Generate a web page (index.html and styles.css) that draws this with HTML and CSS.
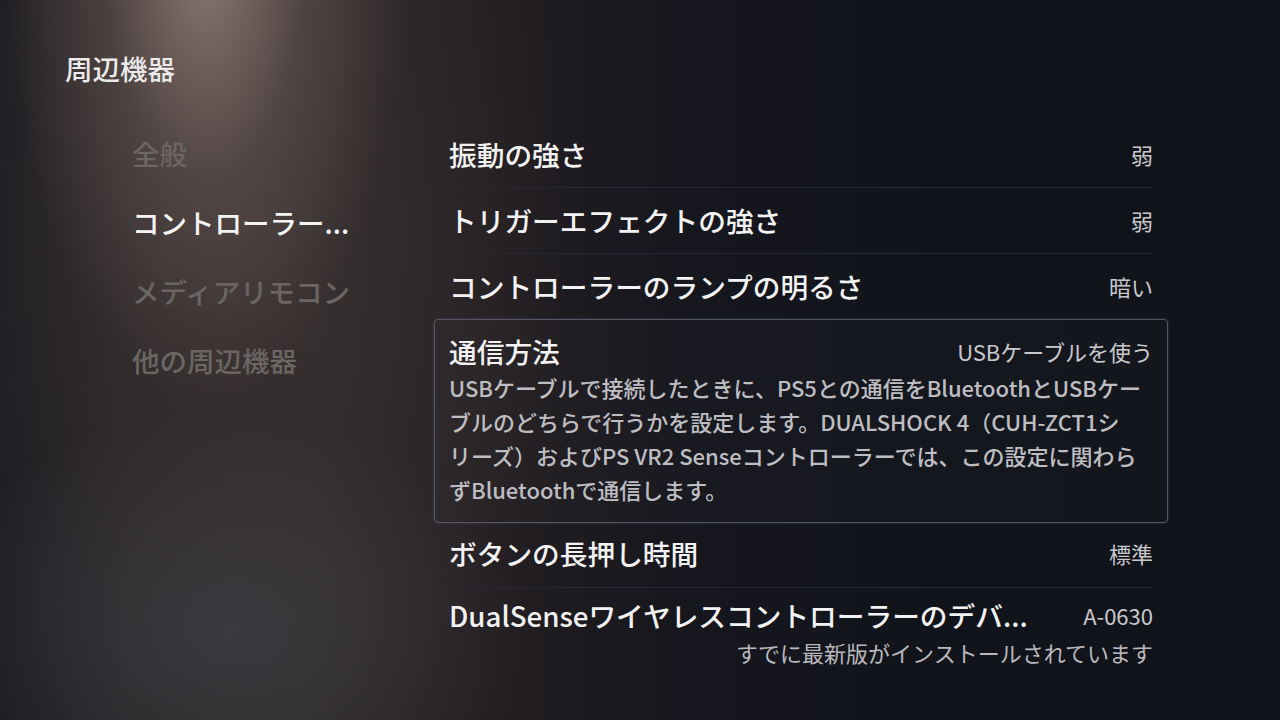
FILE: index.html
```html
<!DOCTYPE html>
<html lang="ja">
<head>
<meta charset="utf-8">
<title>周辺機器</title>
<link rel="stylesheet" href="styles.css">
</head>
<body>
<div class="screen">
  <header class="header">周辺機器</header>
  <main class="main">
    <nav class="nav">
      <div class="nav-item">全般</div>
      <div class="nav-item active">コントローラー...</div>
      <div class="nav-item">メディアリモコン</div>
      <div class="nav-item">他の周辺機器</div>
    </nav>
    <section class="list">
      <div class="row">
        <span class="label">振動の強さ</span>
        <span class="value">弱</span>
      </div>
      <div class="row">
        <span class="label">トリガーエフェクトの強さ</span>
        <span class="value">弱</span>
      </div>
      <div class="row no-sep">
        <span class="label">コントローラーのランプの明るさ</span>
        <span class="value">暗い</span>
      </div>
      <div class="row selected">
        <div class="row-head">
          <span class="label">通信方法</span>
          <span class="value">USBケーブルを使う</span>
        </div>
        <p class="desc">USBケーブルで接続したときに、PS5との通信をBluetoothとUSBケー<br>ブルのどちらで行うかを設定します。DUALSHOCK 4（CUH-ZCT1シ<br>リーズ）およびPS VR2 Senseコントローラーでは、この設定に関わら<br>ずBluetoothで通信します。</p>
      </div>
      <div class="row after-sel">
        <span class="label">ボタンの長押し時間</span>
        <span class="value">標準</span>
      </div>
      <div class="row no-sep stacked">
        <div class="row-head">
          <span class="label">DualSenseワイヤレスコントローラーのデバ...</span>
          <span class="value">A-0630</span>
        </div>
        <div class="sub">すでに最新版がインストールされています</div>
      </div>
    </section>
  </main>
</div>
</body>
</html>
```
FILE: styles.css
```css
html, body {
  margin: 0;
  padding: 0;
}
body {
  width: 1280px;
  height: 720px;
  overflow: hidden;
  font-family: "Noto Sans CJK JP", "Noto Sans", sans-serif;
  color: #f0f0f0;
  background:
    radial-gradient(ellipse 200px 440px at 206px -40px, rgba(160,138,130,0.80), rgba(125,105,100,0.38) 50%, rgba(0,0,0,0) 100%),
    radial-gradient(ellipse 300px 220px at 230px 630px, rgba(72,72,80,0.55), rgba(0,0,0,0) 100%),
    radial-gradient(ellipse 340px 560px at 230px 240px, rgba(70,60,58,0.55), rgba(0,0,0,0) 100%),
    linear-gradient(90deg, #1b1b21 0%, #262325 10%, #2b2728 25%, #241f22 38%, #17171e 52%, #12141c 70%, #11131b 100%);
}
.screen {
  width: 1280px;
  height: 720px;
}
.header {
  padding: 49px 0 0 65px;
  height: 38px;
  font-size: 27.5px;
  line-height: 38px;
  font-weight: 500;
  color: #ebebeb;
}
.main {
  display: flex;
  margin-top: 35px;
}
.nav {
  width: 302px;
  padding: 12px 0 0 132px;
  box-sizing: content-box;
  display: flex;
  flex-direction: column;
  gap: 31px;
}
.nav-item {
  font-size: 27.5px;
  line-height: 38px;
  font-weight: 500;
  color: #6b6664;
  white-space: nowrap;
}
.nav-item.active {
  color: #f4f4f4;
}
.list {
  width: 734px;
  display: flex;
  flex-direction: column;
}
.row {
  margin: 0 15px;
  padding: 13px 0 14px;
  border-bottom: 1px solid #262832;
  display: flex;
  justify-content: space-between;
  align-items: center;
}
.row.no-sep {
  border-bottom: none;
}
.row.after-sel {
  padding: 11px 0 15px;
}
.label {
  font-size: 27.7px;
  line-height: 38px;
  font-weight: 500;
  color: #f2f2f2;
  white-space: nowrap;
}
.value {
  font-size: 22px;
  line-height: 38px;
  color: #c9c9cd;
  white-space: nowrap;
}
.row.selected {
  margin: 0;
  padding: 12px 14px 16px;
  border: 1px solid #535667;
  border-radius: 4px;
  box-shadow: 0 0 3px rgba(120,125,150,0.35);
  background: rgba(255,255,255,0.015);
  display: block;
}
.row-head {
  display: flex;
  justify-content: space-between;
  align-items: center;
}
.desc {
  margin: 0;
  font-size: 22px;
  line-height: 34px;
  font-weight: 500;
  color: #bebec2;
  white-space: nowrap;
}
.row.stacked {
  display: block;
  padding-top: 8px;
}
.sub {
  text-align: right;
  font-size: 22px;
  line-height: 36px;
  color: #b9b9bd;
}
```
